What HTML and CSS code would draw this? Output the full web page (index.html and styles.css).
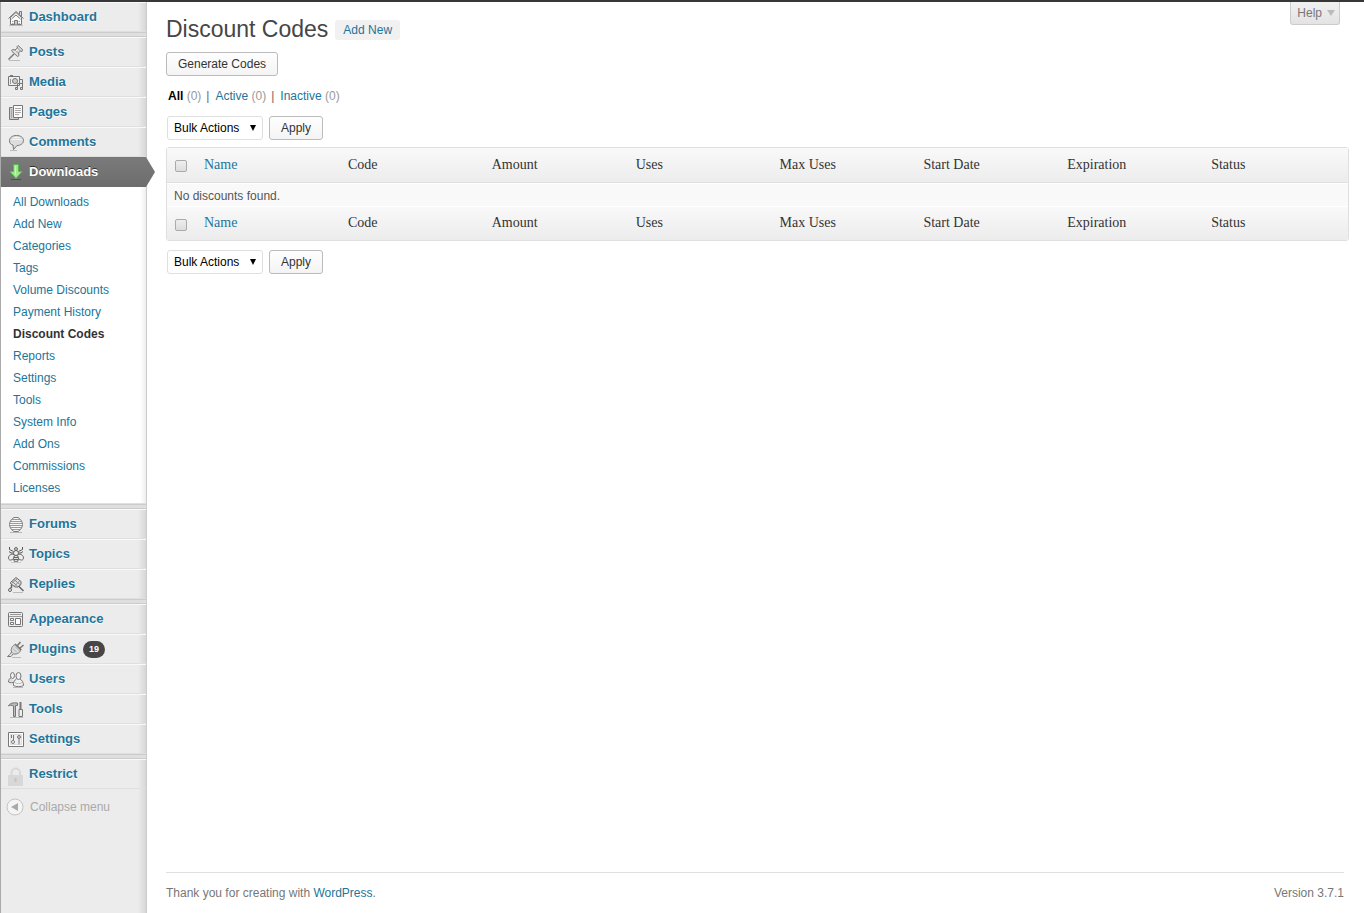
FILE: index.html
```html
<!DOCTYPE html>
<html lang="en">
<head>
    <meta charset="UTF-8">
    <meta name="viewport" content="width=device-width, initial-scale=1.0">
    <title>Discount Codes</title>
    <link rel="stylesheet" href="styles.css">
</head>
<body>
    <div class="admin-bar"></div>

    <div class="wrapper">
        <nav class="sidebar">
            <ul class="menu">
                <li><a href="#">
                    <svg class="icon" viewBox="0 0 16 16"><path d="M2.500 7.500v7h11v-7L8 2.500z" fill="#fafafa"/><path d="M11.500 4V1.500h2V6" fill="#ddd"/><path d="M.5 8.500 8 1.500l7.500 7M3.500 9 8 5l4.500 4" fill="none"/><path d="M6.500 14.500v-4h3v4" fill="#ccc"/><path d="M4 11.500h1.500M10.500 11.500H12M4 13.500h1.500M10.500 13.500H12" stroke="#aaa"/><path d="M1 15.500h14" stroke="#bbb"/></svg>
                    Dashboard</a></li>
                <li class="separator"></li>
                <li><a href="#">
                    <svg class="icon" viewBox="0 0 16 16"><path d="M10 .5l4.500 4-.5 2-1.500-.5L10.500 8l.5 2.500-1.500 1L3.500 6l1-1.500 2.500.5L9.500 3 9 1.500z" fill="#ddd"/><path d="M6 9 .5 14.500" stroke-width="1.500"/><path d="M7 5l3.500 3M9.500 3l3 3" stroke="#999"/><path d="M9.500 4.500 7.500 6.500" stroke="#fff"/><path d="M1 15.500h11" stroke="#bbb"/></svg>
                    Posts</a></li>
                <li><a href="#">
                    <svg class="icon" viewBox="0 0 16 16"><path d="M.5 1.500h11v9H.5z" fill="#eee"/><path d="M2 .5h3" /><circle cx="7" cy="6" r="2.500" fill="#ccc"/><path d="M2.500 4v5" stroke="#999"/><path d="M11.500 4.500h3V13M9.500 13V8.500h5" fill="none"/><path d="M7.500 12.500h2v2h-2zM12.500 12.500h2v2h-2z" fill="#ddd"/></svg>
                    Media</a></li>
                <li><a href="#">
                    <svg class="icon" viewBox="0 0 16 16"><path d="M4.500 2.500h-3v12h9v-2" fill="#ccc"/><path d="M5.500.5h9v12h-9z" fill="#fafafa"/><path d="M7 3.500h6M7 5.500h6M7 7.500h6M7 9.500h4M3.500 4v9" stroke="#aaa"/></svg>
                    Pages</a></li>
                <li><a href="#">
                    <svg class="icon" viewBox="0 0 16 16"><path d="M8.500.5c4 0 7 2 7 5s-3 5-6.500 5L5.500 14.500 5 10C2.500 9.500 1.500 8 1.500 5.500c0-3 3-5 7-5z" fill="#ddd"/><path d="M5 2.500h7M3.500 4.500h10" stroke="#f5f5f5"/><path d="M2 15.500h7" stroke="#bbb"/></svg>
                    Comments</a></li>
                <li class="current">
                    <a href="#">
                        <svg class="icon" viewBox="0 0 16 16"><path d="M3 14.500h10" stroke="#505050"/><path d="M5.500-.5h5v7H14l-6 7-6-7h3.500z" fill="#a0e890" stroke="#5cb84c"/><path d="M7.500 1v9" stroke="#c5f5ba"/></svg>
                        Downloads</a>
                    <ul class="submenu">
                        <li><a href="#">All Downloads</a></li>
                        <li><a href="#">Add New</a></li>
                        <li><a href="#">Categories</a></li>
                        <li><a href="#">Tags</a></li>
                        <li><a href="#">Volume Discounts</a></li>
                        <li><a href="#">Payment History</a></li>
                        <li><a href="#" class="active">Discount Codes</a></li>
                        <li><a href="#">Reports</a></li>
                        <li><a href="#">Settings</a></li>
                        <li><a href="#">Tools</a></li>
                        <li><a href="#">System Info</a></li>
                        <li><a href="#">Add Ons</a></li>
                        <li><a href="#">Commissions</a></li>
                        <li><a href="#">Licenses</a></li>
                    </ul>
                </li>
                <li class="separator"></li>
                <li><a href="#">
                    <svg class="icon" viewBox="0 0 16 16"><path d="M6 .5h4l2.500 2 1.500 2.500.5 2.500-.5 2.500-1.500 2.500L10 14.500H6L3.500 12.500 2 10l-.5-2.500L2 5l1.500-2.500z" fill="#fafafa"/><path d="M4 2.500h8M3 4.500h10M2 6.500h12M2 8.500h12M3 10.500h10M4 12.500h8" stroke="#999"/><path d="M2 15.500h12" stroke="#bbb"/></svg>
                    Forums</a></li>
                <li><a href="#">
                    <svg class="icon" viewBox="0 0 16 16"><path d="M1.500 0v2.500l4 2M14.500 0v2.500l-4 2M5 6H3L1 4.500M11 6h2l2-1.500" fill="none" stroke="#555"/><path d="M6 7.500C3 6.500.500 8.500.500 11s3 3 5.500 0M10 7.500c3-1 5.500 1 5.500 3.500s-3 3-5.500 0" fill="#eee" stroke="#666"/><ellipse cx="8" cy="11.500" rx="2.500" ry="3.500" fill="#ddd" stroke="#666"/><circle cx="8" cy="6" r="2.500" fill="#eee" stroke="#666"/><circle cx="8" cy="2" r="1.500" fill="#ccc" stroke="#666"/><path d="M6 10.500h4M6 12.500h4" stroke="#666"/><path d="M3 15.500h10" stroke="#ccc"/></svg>
                    Topics</a></li>
                <li><a href="#">
                    <svg class="icon" viewBox="0 0 16 16"><path d="M8 .5l5 4v3L10 10H7L2.500 6.500v-1z" fill="#e5e5e5" stroke="#666"/><path d="M4 4.500 9.500 9M6 2.500l6 5M9 2 3.500 6.500M11.500 4l-5 5" stroke="#888"/><path d="M10.500 9l5 5M3.500 7.500v3L2 11.500" fill="none" stroke="#666" stroke-width="1.500"/><circle cx="2" cy="13" r="1.500" fill="#eee" stroke="#666"/><path d="M5 15.500h10" stroke="#bbb"/></svg>
                    Replies</a></li>
                <li class="separator"></li>
                <li><a href="#">
                    <svg class="icon" viewBox="0 0 16 16"><rect x=".5" y=".5" width="14" height="14" rx="1" fill="#eee"/><path d="M2 2.500h11M1 4.500h13" stroke="#999"/><path d="M2.500 6.500h3v2h-3zM2.500 10.500h3v2h-3zM7.500 6.500h5v6h-5z" fill="#fff"/></svg>
                    Appearance</a></li>
                <li><a href="#">
                    <svg class="icon" viewBox="0 0 16 16"><path d="M7.500 2.500c-3 1-5 4-4 7.500l2 2c4 .5 7-1.500 7.500-5z" fill="#ddd"/><path d="M7 2l6 6M9 4 12.500 0M11.500 6.500 15.500 3" fill="none" stroke-width="1.500"/><path d="M5 6.500l4 4M7 4.500l4.500 4.500" stroke="#aaa"/><path d="M3.500 10l-1 2-3 2.500h3.500l2-2.500" fill="#eee"/><path d="M4 15.500h9" stroke="#bbb"/></svg>
                    Plugins <span class="count">19</span></a></li>
                <li><a href="#">
                    <svg class="icon" viewBox="0 0 16 16"><ellipse cx="4.500" cy="3.500" rx="2" ry="3" fill="#eee"/><path d="M3 6C1 6.500.500 8 .5 10c2 1 4 1 6 0" fill="#ddd"/><path d="M8.500 7c-2 1-3.500 3.500-3 6.500 2.500 1.500 7.500 1.500 10 0 0-3-1.500-5.500-3.500-6.500" fill="#f2f2f2"/><ellipse cx="10.500" cy="4" rx="2.500" ry="3.500" fill="#eee"/><path d="M7 10.500c2 1.500 5 1.500 7 0" stroke="#bbb" fill="none"/><path d="M5 15.500h10" stroke="#bbb"/></svg>
                    Users</a></li>
                <li><a href="#">
                    <svg class="icon" viewBox="0 0 16 16"><path d="M.5 4C2 1 5 .5 9.500 1v2.500h-2V14.500h-2V4c-2-1-3.500-1-5 0z" fill="#bbb"/><path d="M12.500 0v7" stroke-width="2"/><path d="M11 7.500h3.500v7H11z" fill="#eee"/><path d="M2 15.500h13" stroke="#bbb"/></svg>
                    Tools</a></li>
                <li><a href="#">
                    <svg class="icon" viewBox="0 0 16 16"><path d="M.5.5h15v14H.5z" fill="#fff"/><path d="M2.500 2.500h11v10h-11z" fill="#eee" stroke="#ddd"/><path d="M5.500 3v5M3.500 3v3M11 7v5.500"/><circle cx="5" cy="10" r="1.500" fill="#fff"/><circle cx="11" cy="5" r="1.500" fill="#ccc"/></svg>
                    Settings</a></li>
                <li class="separator"></li>
                <li><a href="#">
                    <svg class="icon" viewBox="0 0 16 16"><path d="M3.500 9V6c0-6 8.500-6 8.500 0v3" fill="none" stroke="#d8d8d8" stroke-width="2"/><rect x="0" y="8" width="15" height="11" rx="1" fill="#d8d8d8" stroke="none"/><path d="M7.500 11v4" stroke="#c4c4c4" stroke-width="2"/></svg>
                    Restrict</a></li>
            </ul>
            <button type="button" class="collapse">
                <svg class="collapse-icon" viewBox="0 0 18 18"><circle cx="9" cy="9" r="8" fill="#f4f4f4" stroke="#c4c4c4"/><path d="M5 9l7-4v8z" fill="#aaa"/></svg>
                Collapse menu
            </button>
        </nav>

        <div class="content">
            <button type="button" class="help">Help <span class="caret"></span></button>

            <main>
                <h1>Discount Codes <a href="#" class="add-new">Add New</a></h1>
                <button type="button" class="button">Generate Codes</button>

                <ul class="views">
                    <li><a href="#" class="selected">All</a> <span>(0)</span></li>
                    <li><a href="#">Active</a> <span>(0)</span></li>
                    <li><a href="#">Inactive</a> <span>(0)</span></li>
                </ul>

                <div class="bulk">
                    <select aria-label="Bulk action, top">
                        <option>Bulk Actions</option>
                    </select>
                    <button type="button" class="button">Apply</button>
                </div>

                <table class="codes">
                    <thead>
                        <tr>
                            <th class="check"><input type="checkbox" aria-label="Select all, top"></th>
                            <th><a href="#">Name</a></th>
                            <th>Code</th>
                            <th>Amount</th>
                            <th>Uses</th>
                            <th>Max Uses</th>
                            <th>Start Date</th>
                            <th>Expiration</th>
                            <th>Status</th>
                        </tr>
                    </thead>
                    <tbody>
                        <tr>
                            <td colspan="9">No discounts found.</td>
                        </tr>
                    </tbody>
                    <tfoot>
                        <tr>
                            <th class="check"><input type="checkbox" aria-label="Select all, bottom"></th>
                            <th><a href="#">Name</a></th>
                            <th>Code</th>
                            <th>Amount</th>
                            <th>Uses</th>
                            <th>Max Uses</th>
                            <th>Start Date</th>
                            <th>Expiration</th>
                            <th>Status</th>
                        </tr>
                    </tfoot>
                </table>

                <div class="bulk">
                    <select aria-label="Bulk action, bottom">
                        <option>Bulk Actions</option>
                    </select>
                    <button type="button" class="button">Apply</button>
                </div>
            </main>

            <footer>
                <span>Thank you for creating with <a href="#">WordPress</a>.</span>
                <span>Version 3.7.1</span>
            </footer>
        </div>
    </div>
</body>
</html>
```
FILE: styles.css
```css
* {
    box-sizing: border-box;
}

body {
    display: flex;
    flex-direction: column;
    min-height: 100vh;
    margin: 0;
    font-family: "Liberation Sans", Arial, sans-serif;
    font-size: 12px;
    line-height: 16px;
    color: #333;
    background-color: #fff;
}

ul {
    list-style: none;
    margin: 0;
    padding: 0;
}

a {
    color: #21759b;
    text-decoration: none;
}

a:hover {
    color: #d54e21;
}

button, select, input {
    font-family: inherit;
    font-size: 12px;
    margin: 0;
}

.admin-bar {
    height: 2px;
    background-color: #373737;
}

.wrapper {
    display: flex;
    flex: 1;
}

/* Left menu */
.sidebar {
    width: 147px;
    border-left: 1px solid #aaa;
    border-right: 1px solid #ccc;
    background: linear-gradient(to left, #d6d6d6, #ececec 8px);
}

.menu > li > a {
    display: flex;
    align-items: center;
    height: 30px;
    padding-left: 7px;
    border-top: 1px solid #f9f9f9;
    border-bottom: 1px solid #dfdfdf;
    font-size: 13px;
    font-weight: bold;
    text-shadow: 0 1px 0 #fff;
}

.icon {
    width: 16px;
    height: 16px;
    margin-right: 5px;
    margin-top: 2px;
    fill: none;
    stroke: #777;
    overflow: visible;
}

.menu .separator {
    height: 5px;
    border-top: 1px solid #ccc;
    border-bottom: 1px solid #ccc;
    background-color: #dfdfdf;
}

.count {
    margin-left: 7px;
    padding: 0 6px;
    border-radius: 10px;
    background-color: #464646;
    color: #fff;
    font-size: 9px;
    line-height: 17px;
    text-shadow: none;
}

.menu > .current > a {
    position: relative;
    border-color: #777 transparent #6d6d6d;
    border-left: 0;
    border-right: 0;
    background: linear-gradient(#7a7a7a, #6d6d6d);
    color: #fff;
    text-shadow: 0 -1px 0 #333;
}

.menu > .current > a::after {
    content: "";
    position: absolute;
    left: 100%;
    top: -1px;
    width: 9px;
    height: 30px;
    background: linear-gradient(#7a7a7a, #6d6d6d);
    clip-path: polygon(0 0, 100% 50%, 0 100%);
}

.submenu {
    padding: 4px 0 4px 12px;
    border-bottom: 1px solid #dfdfdf;
    background: linear-gradient(to left, #eee, #fff 6px);
}

.submenu a {
    display: block;
    line-height: 22px;
}

.submenu .active {
    color: #333;
    font-weight: bold;
}

.collapse {
    display: flex;
    align-items: center;
    gap: 6px;
    height: 35px;
    padding: 0 5px;
    border: 0;
    background: none;
    color: #aaa;
    cursor: pointer;
}

.collapse-icon {
    width: 18px;
    height: 18px;
}

/* Page body */
.content {
    display: flex;
    flex-direction: column;
    flex: 1;
    padding: 0 15px 0 19px;
}

.help {
    display: flex;
    align-items: center;
    align-self: flex-end;
    gap: 5px;
    height: 23px;
    margin-right: 9px;
    margin-bottom: -23px;
    padding: 0 4px 0 6px;
    border: 1px solid #ccc;
    border-top: 0;
    border-radius: 0 0 3px 3px;
    background: linear-gradient(#f1f1f1, #e3e3e3);
    color: #777;
    cursor: pointer;
}

.caret {
    border: 4px solid transparent;
    border-top: 6px solid #bbb;
    border-bottom: 0;
}

main {
    flex: 1;
}

h1 {
    display: flex;
    align-items: center;
    gap: 7px;
    margin: 0;
    padding: 12px 0 8px;
    color: #464646;
    font-size: 23px;
    font-weight: normal;
    line-height: 30px;
}

.add-new {
    margin-top: 2px;
    padding: 0 8px;
    border-radius: 3px;
    background-color: #f1f1f1;
    font-size: 12px;
    line-height: 20px;
}

.button {
    height: 24px;
    padding: 0 11px;
    border: 1px solid #bbb;
    border-radius: 3px;
    background: linear-gradient(#fefefe, #f4f4f4);
    color: #333;
    cursor: pointer;
}

.views {
    display: flex;
    padding: 12px 2px;
}

.views li + li::before {
    content: "|";
    margin: 0 6px 0 5px;
    color: #666;
}

.views span {
    color: #999;
}

.views .selected {
    color: #000;
    font-weight: bold;
}

.bulk {
    display: flex;
    gap: 6px;
    padding-left: 1px;
}

.bulk select {
    appearance: none;
    width: 96px;
    height: 24px;
    padding: 0 6px;
    border: 1px solid #dfdfdf;
    border-radius: 3px;
    background: #fff url("data:image/svg+xml,%3Csvg xmlns='http://www.w3.org/2000/svg' width='6' height='6'%3E%3Cpath d='M0 0h6L3 6z'/%3E%3C/svg%3E") no-repeat right 6px center;
    color: #000;
}

/* Discount list */
.codes {
    width: 100%;
    margin: 7px 0 9px;
    border: 1px solid #dfdfdf;
    border-radius: 3px;
    border-spacing: 0;
    table-layout: fixed;
    background-color: #f9f9f9;
}

.codes th {
    height: 35px;
    padding: 0 7px;
    color: #333;
    font-family: "Liberation Serif", "Times New Roman", serif;
    font-size: 14px;
    font-weight: normal;
    text-align: left;
}

.codes thead tr, .codes tfoot tr {
    background: linear-gradient(#f9f9f9, #ececec);
}

.codes thead th {
    border-bottom: 1px solid #dfdfdf;
}

.codes tfoot th {
    height: 34px;
    padding-bottom: 2px;
    border-top: 1px solid #fff;
}

.codes .check {
    width: 30px;
    padding: 2px 0 0 8px;
    line-height: 0;
}

.codes td {
    height: 23px;
    padding: 2px 7px 0;
    border-top: 1px solid #fff;
    color: #555;
}

.codes input {
    appearance: none;
    width: 12px;
    height: 12px;
    border: 1px solid #aaa;
    border-radius: 2px;
    background: linear-gradient(#eee, #ddd);
}

footer {
    display: flex;
    justify-content: space-between;
    margin-right: 5px;
    padding: 12px 0;
    border-top: 1px solid #dfdfdf;
    color: #777;
}
```
